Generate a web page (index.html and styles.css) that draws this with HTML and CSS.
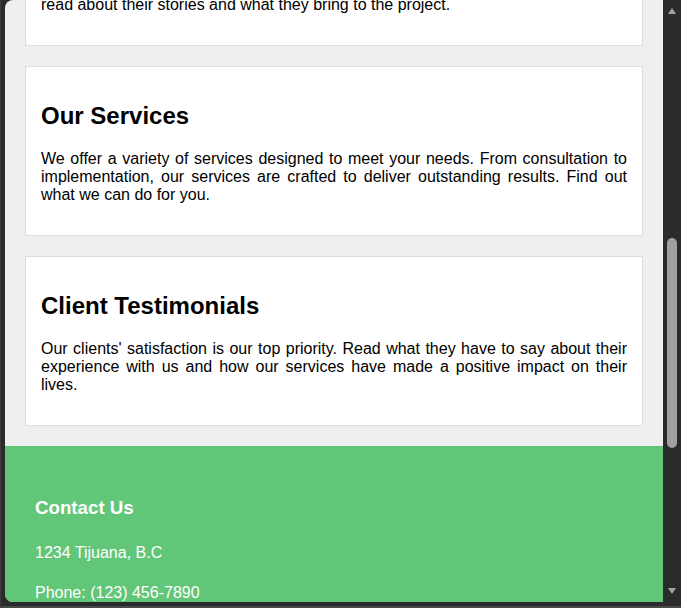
FILE: index.html
```html
<!DOCTYPE html>
<html lang="en">
<head>
<meta charset="utf-8">
<title>Our Services</title>
<link rel="stylesheet" href="styles.css">
</head>
<body>
<div class="window">
  <div class="viewport">
    <div class="page">
      <div class="scroller">
        <main class="container">
          <section class="card">
            <h2>Meet the Team</h2>
            <p>Our team is made up of passionate professionals with years of experience in their fields. Each member brings unique skills and perspectives. Get to know the people behind our work and<br>read about their stories and what they bring to the project.</p>
          </section>
          <section class="card">
            <h2>Our Services</h2>
            <p>We offer a variety of services designed to meet your needs. From consultation to implementation, our services are crafted to deliver outstanding results. Find out what we can do for you.</p>
          </section>
          <section class="card">
            <h2>Client Testimonials</h2>
            <p>Our clients' satisfaction is our top priority. Read what they have to say about their experience with us and how our services have made a positive impact on their lives.</p>
          </section>
        </main>
        <footer class="footer">
          <h3>Contact Us</h3>
          <p>1234 Tijuana, B.C</p>
          <p>Phone: (123) 456-7890</p>
          <p>Email: info@example.com</p>
        </footer>
      </div>
    </div>
    <div class="scrollbar">
      <span class="arrow arrow-up"></span>
      <div class="track"><span class="thumb"></span></div>
      <span class="arrow arrow-down"></span>
    </div>
  </div>
  <div class="bottom-edge"></div>
</div>
</body>
</html>
```
FILE: styles.css
```css
html, body {
  margin: 0;
  padding: 0;
  background: #2b2b2b;
}

.window {
  width: 681px;
  height: 608px;
  display: flex;
  flex-direction: column;
  background: #2b2b2b;
  border-left: 1px solid #3d3d3d;
  box-sizing: border-box;
}

.viewport {
  display: flex;
  height: 602px;
  margin-left: 4px;
  border-radius: 8px 0 8px 8px;
  overflow: hidden;
}

.page {
  flex: 1;
  overflow: hidden;
  background: #efefef;
  font-family: "Liberation Sans", Arial, sans-serif;
  color: #000;
}

.scroller {
  margin-top: -161.6px;
}

.container {
  display: block;
  padding: 20px 20px 0;
}

.card {
  background: #fff;
  border: 1px solid #dddddd;
  padding: 15px;
  margin-bottom: 20px;
}

.card h2 {
  font-size: 24px;
  margin: 19.92px 0;
}

.card p {
  font-size: 16px;
  margin: 16px 0;
  text-align: justify;
}

.footer {
  background: #62c679;
  color: #fff;
  padding: 29px 30px 30px;
  line-height: 1.5;
}

.footer h3 {
  font-size: 18.72px;
  margin: 18.72px 0 19.72px;
}

.footer p {
  font-size: 16px;
  margin: 16px 0;
}

.scrollbar {
  width: 18px;
  display: flex;
  flex-direction: column;
  align-items: center;
  background: #2b2b2b;
}

.arrow {
  width: 0;
  height: 0;
  border-left: 4px solid transparent;
  border-right: 4px solid transparent;
}

.arrow-up {
  margin-top: 8px;
  border-bottom: 6px solid #a3a3a3;
}

.arrow-down {
  margin-bottom: 8px;
  border-top: 6px solid #a3a3a3;
}

.track {
  flex: 1;
  width: 100%;
  display: flex;
  justify-content: center;
}

.thumb {
  width: 10px;
  height: 210px;
  margin-top: 224px;
  background: #a0a0a0;
  border-radius: 5px;
}

.bottom-edge {
  flex: 1;
  border-bottom: 2px solid #4a4a4a;
}
```
